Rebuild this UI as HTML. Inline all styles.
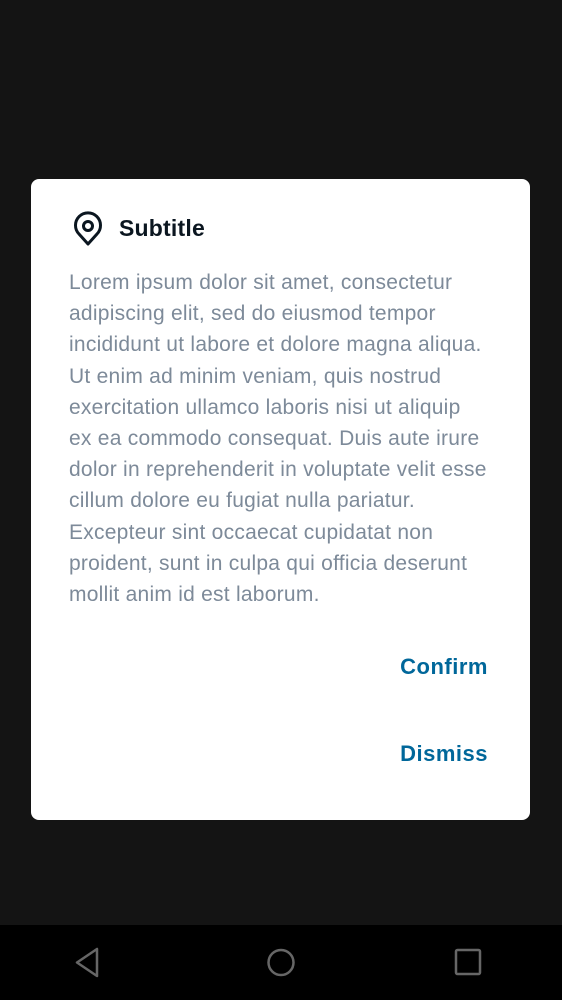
<!DOCTYPE html>
<html><head><meta charset="utf-8"><style>
html,body{margin:0;padding:0;width:562px;height:1000px;background:#141414;overflow:hidden;font-family:"Liberation Sans",Arial,sans-serif}
.dlg{position:absolute;left:31px;top:179px;width:499px;height:641px;background:#fff;border-radius:8px}
.title{position:absolute;top:215px;left:119px;font-size:23px;font-weight:bold;color:#0b1620;letter-spacing:0.2px}
.body{position:absolute;left:69px;top:267px;width:440px;font-size:21px;line-height:31.2px;color:#7d8a99;white-space:nowrap;letter-spacing:0.25px}
.btn{position:absolute;right:74px;font-size:22px;font-weight:bold;color:#00679a;letter-spacing:0.5px}
.nav{position:absolute;left:0;top:925px;width:562px;height:75px;background:#000}
</style></head><body>
<div class="dlg"></div>
<svg style="position:absolute;left:70px;top:211px" width="36" height="36" viewBox="0 0 36 36">
<path d="M18 33 L9 23 A12.5 12.5 0 1 1 27 23 Z" fill="none" stroke="#0b1620" stroke-width="3" stroke-linejoin="round"/>
<circle cx="18" cy="15" r="4.5" fill="none" stroke="#0b1620" stroke-width="3"/>
</svg>
<div class="title">Subtitle</div>
<div class="body">Lorem ipsum dolor sit amet, consectetur<br>adipiscing elit, sed do eiusmod tempor<br>incididunt ut labore et dolore magna aliqua.<br>Ut enim ad minim veniam, quis nostrud<br>exercitation ullamco laboris nisi ut aliquip<br>ex ea commodo consequat. Duis aute irure<br>dolor in reprehenderit in voluptate velit esse<br>cillum dolore eu fugiat nulla pariatur.<br>Excepteur sint occaecat cupidatat non<br>proident, sunt in culpa qui officia deserunt<br>mollit anim id est laborum.</div>
<div class="btn" style="top:654px">Confirm</div>
<div class="btn" style="top:741px">Dismiss</div>
<div class="nav"></div>
<svg style="position:absolute;left:0;top:925px" width="562" height="75">
<path d="M97 24 L97 51 L77 37.5 Z" fill="none" stroke="#666" stroke-width="2.5" stroke-linejoin="round"/>
<circle cx="281" cy="37.5" r="12.5" fill="none" stroke="#666" stroke-width="2.5"/>
<rect x="456" y="25" width="24" height="24" rx="1.5" fill="none" stroke="#666" stroke-width="2.5"/>
</svg>
</body></html>
